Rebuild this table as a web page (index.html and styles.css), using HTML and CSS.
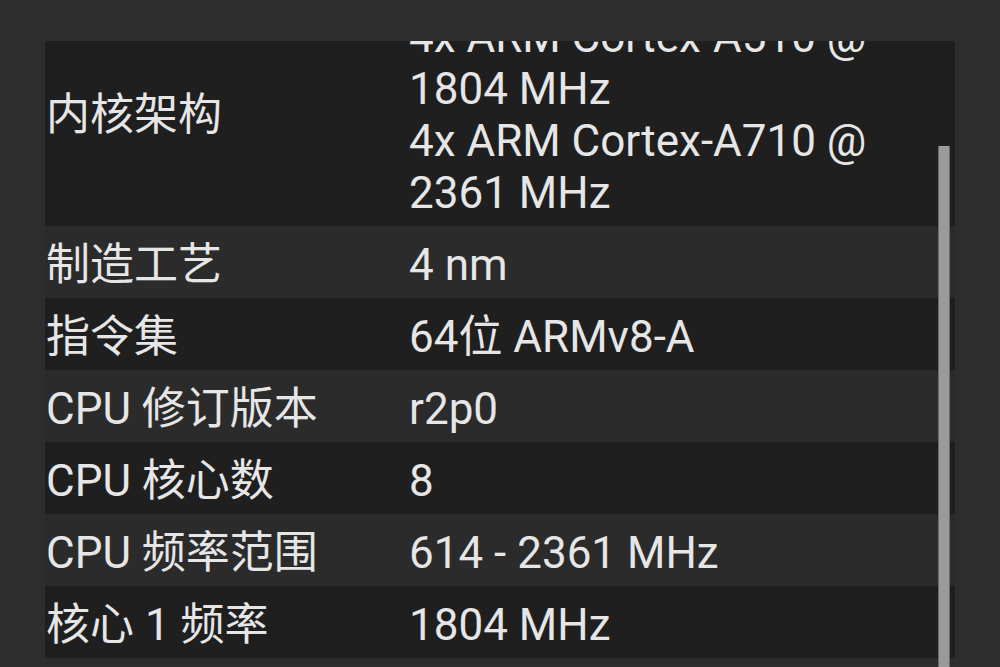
FILE: index.html
```html
<!DOCTYPE html>
<html lang="zh">
<head>
<meta charset="utf-8">
<title>CPU</title>
<link rel="stylesheet" href="styles.css">
</head>
<body>
<main class="page">
  <section class="scroller">
    <div class="list">
      <div class="row dark">
        <div class="label">内核架构</div>
        <div class="value">4x ARM Cortex-A510 @ 1804 MHz<br>4x ARM Cortex-A710 @ 2361 MHz</div>
      </div>
      <div class="row light">
        <div class="label">制造工艺</div>
        <div class="value">4 nm</div>
      </div>
      <div class="row dark">
        <div class="label">指令集</div>
        <div class="value">64位 ARMv8-A</div>
      </div>
      <div class="row light">
        <div class="label">CPU 修订版本</div>
        <div class="value">r2p0</div>
      </div>
      <div class="row dark">
        <div class="label">CPU 核心数</div>
        <div class="value">8</div>
      </div>
      <div class="row light">
        <div class="label">CPU 频率范围</div>
        <div class="value">614 - 2361 MHz</div>
      </div>
      <div class="row dark">
        <div class="label">核心 1 频率</div>
        <div class="value">1804 MHz</div>
      </div>
    </div>
    <div class="scrollbar"></div>
  </section>
</main>
</body>
</html>
```
FILE: styles.css
```css
html, body {
  margin: 0;
  padding: 0;
  background: #2d2d2d;
}
.page {
  height: 667px;
  padding: 41px 45px 0 45px;
  box-sizing: border-box;
  font-family: Roboto, "Noto Sans CJK SC", sans-serif;
  font-size: 44px;
  color: #e6e6e6;
}
.scroller {
  position: relative;
  height: 626px;
  overflow: hidden;
}
.list {
  margin-top: -43px;
  display: flex;
  flex-direction: column;
}
.row {
  display: grid;
  grid-template-columns: 363px 1fr;
  align-items: center;
  padding: 13px 40px 7px 1px;
  line-height: 52px;
}
.dark { background: #1f1f1f; }
.light { background: #2b2b2b; }
.scrollbar {
  position: absolute;
  left: 893px;
  top: 105px;
  bottom: 0;
  width: 10px;
  background: #9a9a9a;
  border-left: 1px solid #6a6a6a;
  border-right: 1px solid #6a6a6a;
}
```
